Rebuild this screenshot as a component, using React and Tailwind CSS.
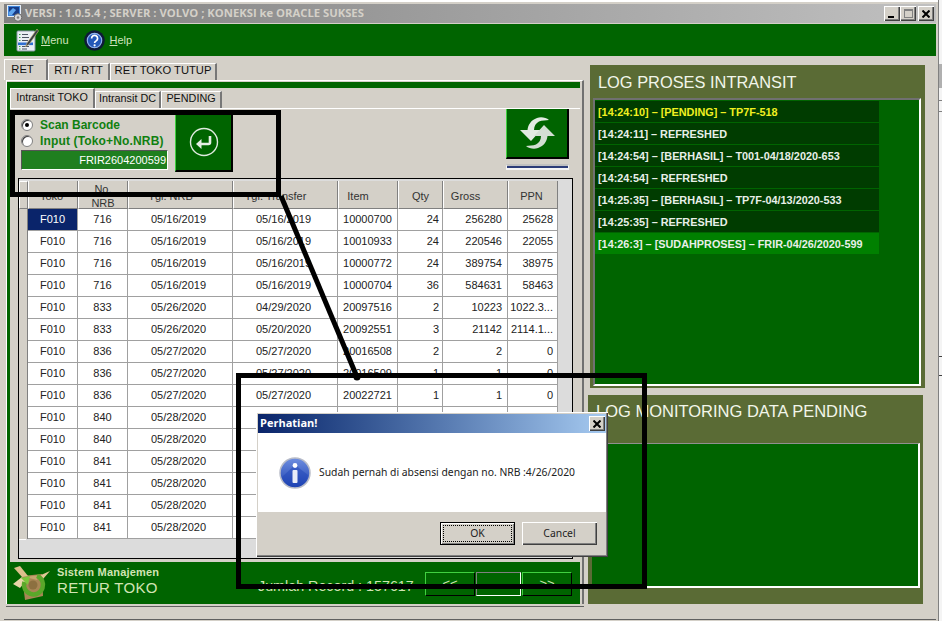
import React from 'react';

const raised = 'shadow-[inset_1px_1px_0_#fff,inset_-1px_-1px_0_#404040,inset_-2px_-2px_0_#808080]';
const sans = 'font-["Liberation_Sans",Arial,sans-serif]';

const d1 = '05/16/2019';
const d2 = '05/26/2020';
const d3 = '05/27/2020';
const d4 = '05/28/2020';

const ROWS = [
  ['F010', '716', d1, d1, '10000700', '24', '256280', '25628'],
  ['F010', '716', d1, d1, '10010933', '24', '220546', '22055'],
  ['F010', '716', d1, d1, '10000772', '24', '389754', '38975'],
  ['F010', '716', d1, d1, '10000704', '36', '584631', '58463'],
  ['F010', '833', d2, '04/29/2020', '20097516', '2', '10223', '1022.3...'],
  ['F010', '833', d2, '05/20/2020', '20092551', '3', '21142', '2114.1...'],
  ['F010', '836', d3, d3, '20016508', '2', '2', '0'],
  ['F010', '836', d3, d3, '20016509', '1', '1', '0'],
  ['F010', '836', d3, d3, '20022721', '1', '1', '0'],
  // the rest of these rows sits behind the dialog
  ['F010', '840', d4, '', '', '', '', ''],
  ['F010', '840', d4, '', '', '', '', ''],
  ['F010', '841', d4, '', '', '', '', ''],
  ['F010', '841', d4, '', '', '', '', ''],
  ['F010', '841', d4, '', '', '', '', ''],
  ['F010', '841', d4, '', '', '', '', ''],
];

const COLS = [
  { label: 'Toko', w: 'w-[50px]', head: 'pr-[3px]', cell: 'justify-center' },
  { label: 'No. NRB', w: 'w-[50px]', head: '', cell: 'justify-center' },
  { label: 'Tgl. NRB', w: 'w-[105px]', head: 'pr-[20px]', cell: 'justify-center pr-[3px]' },
  { label: 'Tgl. Transfer', w: 'w-[105px]', head: 'pr-[20px]', cell: 'justify-center pr-[3px]' },
  { label: 'Item', w: 'w-[60px]', head: 'pr-[20px]', cell: 'justify-center' },
  { label: 'Qty', w: 'w-[45px]', head: '', cell: 'justify-end pr-[3px]' },
  { label: 'Gross', w: 'w-[65px]', head: 'pr-[20px]', cell: 'justify-end pr-[5px]' },
  { label: 'PPN', w: 'w-[50px]', head: 'pr-[3px]', cell: 'justify-end pr-[4px]' },
];

const LOGS = [
  { text: '[14:24:10] – [PENDING] – TP7F-518', cls: 'bg-[#003c00] text-[#f0f020]' },
  { text: '[14:24:11] – REFRESHED', cls: 'bg-[#003c00] text-[#e8efe8]' },
  { text: '[14:24:54] – [BERHASIL] – T001-04/18/2020-653', cls: 'bg-[#003c00] text-[#e8efe8]' },
  { text: '[14:24:54] – REFRESHED', cls: 'bg-[#003c00] text-[#e8efe8]' },
  { text: '[14:25:35] – [BERHASIL] – TP7F-04/13/2020-533', cls: 'bg-[#003c00] text-[#e8efe8]' },
  { text: '[14:25:35] – REFRESHED', cls: 'bg-[#003c00] text-[#e8efe8]' },
  { text: '[14:26:3] – [SUDAHPROSES] – FRIR-04/26/2020-599', cls: 'bg-[#008000] text-[#e8efe8]' },
];

const AppIcon = () => (
  <svg width="16" height="17" viewBox="0 0 16 17">
    <rect x="0.5" y="0.5" width="13" height="11" fill="#3f86dc" stroke="#e4edf8" />
    <rect x="2" y="2" width="10" height="8" fill="#173c86" />
    <path d="M2 7l4-4 3 2-4 5H2z" fill="#5fa6ee" />
    <circle cx="11" cy="12.500" r="3.800" fill="#d8d8d8" stroke="#6a6a6a" />
    <circle cx="11" cy="12.500" r="1.300" fill="#808080" />
  </svg>
);

const MenuIcon = () => (
  <svg width="23" height="24" viewBox="0 0 23 24">
    <rect x="1" y="3" width="18" height="20" rx="1" fill="#e9eef4" stroke="#8c98a8" />
    <g stroke="#4b5563" strokeWidth="1">
      <path d="M6 6.500h6M6 9.500h7M6 12.500h6M6 18.500h7M6 21h5" />
      <path d="M3 6.500h1.500M3 9.500h1.500M3 12.500h1.500M3 18.500h1.500M3 21h1.500" stroke="#39a845" />
    </g>
    <rect x="2" y="14.500" width="15" height="2.600" fill="#2f6fd0" />
    <path d="M21 1L11 15l-1.500 3.500L13 16.500 22.500 3z" fill="#39404a" stroke="#d8c07a" strokeWidth="0.6" />
  </svg>
);

const HelpIcon = () => (
  <svg width="21" height="21" viewBox="0 0 21 21">
    <circle cx="10.500" cy="10.500" r="10.300" fill="#0e1a38" />
    <circle cx="10.500" cy="10.500" r="7.200" fill="#2458b8" stroke="#8fb2ee" strokeWidth="1.200" />
    <path d="M7.600 8.400a3 3 0 1 1 4.600 2.500c-1.100.7-1.600 1.100-1.600 2.200" fill="none" stroke="#fff" strokeWidth="1.700" />
    <circle cx="10.600" cy="15.300" r="1.100" fill="#fff" />
  </svg>
);

const EnterIcon = () => (
  <svg width="30" height="30" viewBox="0 0 30 30">
    <circle cx="15" cy="15" r="13.500" fill="none" stroke="#dfeadf" strokeWidth="1.400" />
    <path d="M21 9v6.500a1.500 1.500 0 0 1-1.500 1.500H11" fill="none" stroke="#e6efe6" strokeWidth="2.600" />
    <path d="M12.500 12l-5.500 5 5.500 5z" fill="#e6efe6" />
  </svg>
);

const RefreshIcon = () => (
  <svg width="38" height="32" viewBox="0 0 38 32">
    <path d="M31 3c-3-2.500-8-3.500-12-2C13 3 10 8 9.500 13H2l11 11 10-11h-7c0-4 2-7 5-8.500 3-1.200 7-1 10-1.500z" fill="#e2ebe2" />
    <path d="M8 29c3 2.500 8 3.500 12 2 6-2 9-7 9.500-12H37L26 8 16 19h7c0 4-2 7-5 8.500-3 1.200-7 1-10 1.500z" fill="#d3dfd3" />
  </svg>
);

const BoxIcon = () => (
  <svg width="38" height="36" viewBox="0 0 38 36">
    <path d="M9 11l20-2 1 22-18 4z" fill="#a88655" />
    <path d="M9 12L1 3l6-2 8 10z" fill="#dcc08c" />
    <path d="M9 12L0 19l7 4 5-6z" fill="#e8d5a8" />
    <path d="M28 10l9-4-7 8z" fill="#e0c896" />
    <path d="M12 12l15-2-3 5z" fill="#c4a46e" />
    <path d="M24 11a9.500 9.500 0 1 1-12.500 6" fill="none" stroke="#5aa82a" strokeWidth="4.500" />
    <path d="M8 13l9-2-2 9z" fill="#7cc63c" />
    <circle cx="20" cy="20" r="4.500" fill="#8c7040" />
  </svg>
);

const InfoIcon = () => (
  <svg width="32" height="32" viewBox="0 0 32 32">
    <defs>
      <linearGradient id="infoFill" x1="0" y1="0" x2="0" y2="1">
        <stop offset="0" stopColor="#6f8fe0" />
        <stop offset="1" stopColor="#1a3fb0" />
      </linearGradient>
    </defs>
    <circle cx="16" cy="16" r="15" fill="url(#infoFill)" stroke="#b8bcc8" strokeWidth="1.500" />
    <path d="M3 20L16 8l13 10c-1 7-6 12-13 12C9 30 4 26 3 20z" fill="#1f46b8" opacity="0.5" />
    <circle cx="16" cy="8.500" r="2.400" fill="#fff" />
    <rect x="13.500" y="13" width="5" height="13" rx="1" fill="#e8ecf8" />
  </svg>
);

const CloseGlyph = () => (
  <svg width="8" height="8" viewBox="0 0 8 8">
    <path d="M0.500 0.500l7 7M7.500 0.500l-7 7" stroke="#000" strokeWidth="2" />
  </svg>
);

const Radio = ({ checked }) => (
  <span className="flex h-[12px] w-[12px] items-center justify-center rounded-full border border-[#808080] bg-white shadow-[inset_1px_1px_0_#404040]">
    {checked ? <span className="h-[4px] w-[4px] rounded-full bg-black" /> : null}
  </span>
);

const Tab = ({ w, active, children }) => (
  <div
    className={`flex ${w} items-center justify-center border-l border-t border-white border-r-2 border-r-[#777] ${
      active ? 'h-[21px] pb-[1px] pr-[6px]' : 'h-[17px] pb-[3px]'
    }`}
  >
    {children}
  </div>
);

const InnerTab = ({ w, active, children }) => (
  <div
    className={`flex ${w} items-center justify-center border-l border-t border-white border-r-2 border-r-[#777] ${
      active ? 'h-[20px] pb-[2px]' : 'h-[17px] pb-[3px]'
    }`}
  >
    {children}
  </div>
);

const DataGrid = () => (
  <div className="mx-[8px] h-[381px] w-[555px] border border-black bg-[#dcdcdc] pt-[2px]">
    <div className="flex h-[28px] w-[539px] bg-[#d4d0c8] text-[#333]">
      <div className="w-[9px] border-l border-t border-white border-r border-r-[#808080] border-b border-b-[#808080]" />
      {COLS.map((col) => (
        <div
          key={col.label}
          className={`flex ${col.w} ${col.head} items-center justify-center border-l border-white border-r border-r-[#808080] border-b border-b-[#808080] pt-[2px] text-center text-[11px] leading-[14px]`}
        >
          {col.label === 'No. NRB' ? (
            <span>
              No.
              <br />
              NRB
            </span>
          ) : (
            col.label
          )}
        </div>
      ))}
    </div>
    {ROWS.map((row, i) => (
      <div key={i} className="flex h-[22px] w-[539px] text-[11px] text-[#222]">
        <div className="flex w-[9px] items-end border-r border-r-[#808080] bg-[#d4d0c8]">
          {i > 0 ? <span className="mb-[-1px] h-px w-[7px] bg-[#fff]" /> : null}
        </div>
        {row.map((value, j) => (
          <div
            key={j}
            className={`flex ${COLS[j].w} items-center overflow-hidden whitespace-nowrap border-b border-r border-[#a0a0a0] ${COLS[j].cell} ${
              i === 0 && j === 0 ? 'bg-[#0a246a] text-white' : 'bg-white'
            }`}
          >
            {value}
          </div>
        ))}
      </div>
    ))}
  </div>
);

const Footer = () => (
  <div className="flex flex-1 items-center bg-[#006400] pl-[3px] pr-[7px]">
    <BoxIcon />
    <div className="mb-[4px] ml-[6px] flex w-[201px] flex-col text-[#d2e4b4]">
      <span className="text-[11px] leading-[13px] font-bold tracking-[0.2px]">Sistem Manajemen</span>
      <span className="text-[15px] leading-[18px] tracking-[0.3px]">RETUR TOKO</span>
    </div>
    <span className="mt-[7px] w-[167px] text-[14.300px] text-[#d2e4b4]">Jumlah Record : 157617</span>
    <div className="mt-[2px] flex h-[24px] text-[#d2e4b4]">
      <div className="flex w-[50px] items-center justify-center border border-[#40d040] border-b-black border-r-black bg-[#006400] text-[13px]">{'<<'}</div>
      <div className="mx-[1px] h-[24px] w-[45px] border border-[#808080] border-b-white border-r-white bg-[#006400]" />
      <div className="flex w-[50px] items-center justify-center border border-[#40d040] border-b-black border-r-black bg-[#006400] text-[13px]">{'>>'}</div>
    </div>
  </div>
);

const LeftPanel = () => (
  <div className="w-[580px] pt-[3px]">
    <div className="flex h-[21px] items-end text-[11.200px] text-[#111]">
      <Tab w="w-[44px]" active>RET</Tab>
      <Tab w="w-[62px]">RTI / RTT</Tab>
      <Tab w="w-[107px]">RET TOKO TUTUP</Tab>
    </div>
    <div className="ml-[2px] h-[524px] w-[578px] border-l border-t border-white border-r-2 border-r-[#707070] pr-[2px] pt-[1px]">
      <div className="flex h-full flex-col bg-[#006400] pl-[3px] pt-[6px]">
        <div className="flex h-[20px] items-end bg-[#d4d0c8] text-[10.800px] text-[#111]">
          <InnerTab w="w-[85px]" active>Intransit TOKO</InnerTab>
          <InnerTab w="w-[66px]">Intransit DC</InnerTab>
          <InnerTab w="w-[61px]">PENDING</InnerTab>
        </div>
        <div className="h-[454px] border-t border-white bg-[#d4d0c8]">
          <div className="flex h-[69px]">
            <div className="ml-[11px] w-[147px] pt-[8px]">
              <div className="flex h-[16px] items-center gap-[7px] text-[12px] font-bold text-[#108010]">
                <Radio checked />
                Scan Barcode
              </div>
              <div className="flex h-[16px] items-center gap-[7px] whitespace-nowrap text-[12px] font-bold tracking-[0.15px] text-[#108010]">
                <Radio />
                Input (Toko+No.NRB)
              </div>
              <div className="mt-[1px] flex h-[20px] items-center justify-end border border-[#555] border-b-white border-r-white bg-[#1f7f1f] pr-[1px] text-[11px] text-white">
                FRIR2604200599
              </div>
            </div>
            <div className="ml-[7px] mt-[5px] flex h-[58px] w-[58px] items-center justify-center border-l border-[#40d040] border-b-2 border-b-black border-r-2 border-r-black bg-[#006400]">
              <EnterIcon />
            </div>
            <div className="ml-auto mr-[11px] flex w-[63px] flex-col">
              <div className="flex h-[50px] items-center justify-center border-l border-[#40d040] border-b-2 border-b-black border-r-2 border-r-black bg-[#006400]">
                <RefreshIcon />
              </div>
              <div className="mt-[5px] h-[6px] border-x border-y-2 border-[#f4f4f4] border-t-[#c0c0c0] bg-[#2c3c78]" />
            </div>
          </div>
          <DataGrid />
        </div>
        <Footer />
      </div>
    </div>
    <div className="ml-[2px] mt-[2px] h-px bg-[#606060]" />
  </div>
);

const RightPanels = () => (
  <div className="flex-1 pt-[9px]">
    <div className="ml-[6px] h-[323px] w-[335px] bg-[#5a6b35]">
      <div className="flex h-[33px] items-center pl-[8px] pt-[2px] text-[16.400px] text-[#f2f6ea]">LOG PROSES INTRANSIT</div>
      <div className="ml-[3px] h-[288px] w-[328px] border-l-2 border-t-2 border-[#707070] border-b-2 border-b-white border-r-2 border-r-white bg-[#006400] pt-[1px]">
        {LOGS.map((log, i) => (
          <div key={i} className={`flex h-[22px] w-[284px] items-center border-b border-[#006400] pl-[3px] pt-[1px] text-[10.850px] font-bold ${log.cls}`}>
            {log.text}
          </div>
        ))}
      </div>
    </div>
    <div className="ml-[4px] mt-[7px] h-[209px] w-[335px] bg-[#5a6b35]">
      <div className="h-[48px] pl-[8px] pt-[6px] text-[16.500px] leading-[20px] text-[#f2f6ea]">LOG MONITORING DATA PENDING</div>
      <div className="ml-[4px] h-[145px] w-[328px] border-t border-[#909090] border-b-2 border-b-white border-r-2 border-r-white bg-[#006400]" />
    </div>
  </div>
);

const Dialog = () => (
  <div className={`absolute left-[256px] top-[412px] h-[145px] w-[352px] bg-[#d4d0c8] p-[2px] ${raised}`}>
    <div className="flex h-[19px] items-center justify-between bg-gradient-to-r from-[#0a246a] to-[#a6caf0] pl-[2px] pr-[1px]">
      <span className="font-['Open_Sans',sans-serif] text-[11px] font-bold text-white">Perhatian!</span>
      <div className={`flex h-[15px] w-[16px] items-center justify-center bg-[#d4d0c8] ${raised}`}>
        <CloseGlyph />
      </div>
    </div>
    <div className="flex h-[79px] items-center bg-white pl-[21px]">
      <InfoIcon />
      <span className="ml-[8px] font-['Noto_Sans',sans-serif] text-[10.350px] text-[#222]">Sudah pernah di absensi dengan no. NRB :4/26/2020</span>
    </div>
    <div className="flex justify-end gap-[7px] pr-[9px] pt-[10px] font-['Noto_Sans',sans-serif] text-[10.400px] text-[#222]">
      <div className="flex h-[23px] w-[75px] items-center justify-center border border-black bg-[#d4d0c8] shadow-[inset_1px_1px_0_#fff,inset_-1px_-1px_0_#808080]">
        <span className="flex h-[17px] w-[69px] items-center justify-center border border-dotted border-black">OK</span>
      </div>
      <div className={`flex h-[23px] w-[75px] items-center justify-center ${raised}`}>Cancel</div>
    </div>
  </div>
);

// spidol annotation drawn on the screenshot
const Annotation = () => (
  <>
    <div className="absolute left-[10px] top-[110px] h-[87px] w-[271px] border-[5px] border-black" />
    <div className="absolute left-[236px] top-[373px] h-[216px] w-[411px] border-[5px] border-black" />
    <svg className="absolute left-0 top-0" width="942" height="621">
      <path d="M281 196L357 377" stroke="#000" strokeWidth="5" />
      <circle cx="357" cy="377" r="3.500" fill="#000" />
    </svg>
  </>
);

const App = () => (
  <div className={`relative flex h-[621px] w-[942px] overflow-hidden bg-[#d4d0c8] ${sans}`}>
    <div className="flex w-[938px] flex-col border-t-2 border-white pl-[4px] pr-[2px] pt-[2px]">
      <div className="flex h-[19px] items-center bg-gradient-to-r from-[#808080] to-[#c0c0c0] pl-[3px] pr-[2px]">
        <AppIcon />
        <span className="ml-[2px] font-['Open_Sans',sans-serif] text-[11.250px] font-bold text-[#d4d0c8]">
          VERSI : 1.0.5.4 ; SERVER : VOLVO ; KONEKSI ke ORACLE SUKSES
        </span>
        <div className="ml-auto flex items-center">
          <div className={`flex h-[15px] w-[16px] items-end bg-[#d4d0c8] pb-[3px] pl-[4px] ${raised}`}>
            <span className="h-[2px] w-[6px] bg-black" />
          </div>
          <div className={`flex h-[15px] w-[16px] items-center justify-center bg-[#d4d0c8] ${raised}`}>
            <span className="h-[9px] w-[9px] border border-t-2 border-[#808080]" />
          </div>
          <div className={`ml-[2px] flex h-[15px] w-[16px] items-center justify-center bg-[#d4d0c8] ${raised}`}>
            <CloseGlyph />
          </div>
        </div>
      </div>
      <div className="mt-[1px] flex h-[32px] items-center bg-[#006400] pl-[12px] text-[11px] text-[#cfe3bc]">
        <MenuIcon />
        <span className="ml-[2px]">
          <u>M</u>enu
        </span>
        <span className="ml-[15px]">
          <HelpIcon />
        </span>
        <span className="ml-[5px]">
          <u>H</u>elp
        </span>
      </div>
      <div className="flex flex-1">
        <LeftPanel />
        <RightPanels />
      </div>
      <div className="mb-[1px] h-px bg-[#606060]" />
    </div>
    <div className="flex flex-1 flex-col border-l border-[#808080] bg-[#f4f4f4]">
      <div className="mt-[64px] h-[24px] bg-[#b0b0b0]" />
      <div className="mt-[12px] h-[12px] border-y border-[#808080]" />
      <div className="mt-[244px] h-[20px] border-y border-[#404040]" />
    </div>
    <Annotation />
    <Dialog />
  </div>
);

export default App;
